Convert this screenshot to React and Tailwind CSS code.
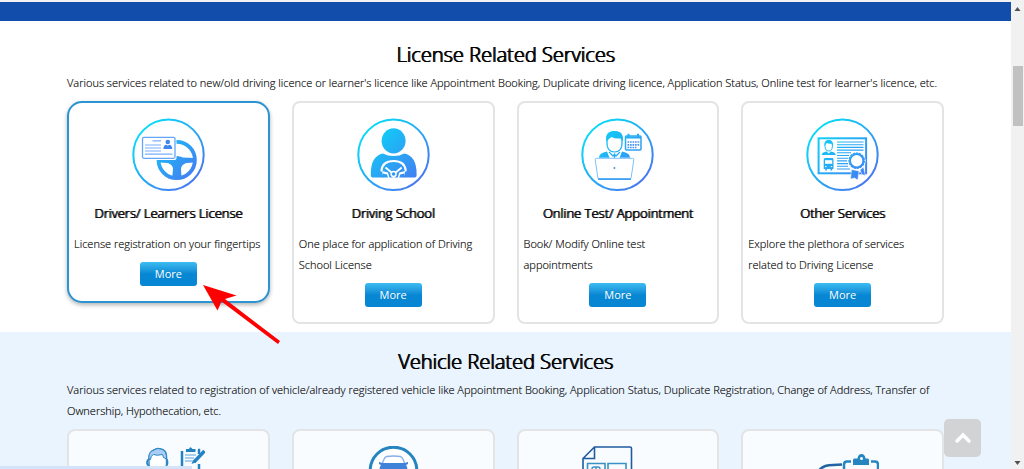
import React from "react";

const licenseServices = [
  {
    title: "Drivers/ Learners License",
    text: "License registration on your fingertips",
    icon: LicenseIcon,
    active: true
  },
  {
    title: "Driving School",
    text: "One place for application of Driving School License",
    icon: SchoolIcon
  },
  {
    title: "Online Test/ Appointment",
    text: "Book/ Modify Online test appointments",
    icon: TestIcon
  },
  {
    title: "Other Services",
    text: "Explore the plethora of services related to Driving License",
    icon: OtherIcon
  }
];

const vehicleIcons = [AgentIcon, CarIcon, DocumentIcon, ClipboardIcon];

function CircleIcon({ id, children }) {
  const paint = `url(#${id})`;
  return (
    <svg className="mx-auto block size-[73px]" viewBox="0 0 73 73" aria-hidden="true">
      <defs>
        <linearGradient id={id} gradientUnits="userSpaceOnUse" x1="10" y1="10" x2="62" y2="62">
          <stop offset="0" stopColor="#06dcf8" />
          <stop offset="1" stopColor="#467af2" />
        </linearGradient>
      </defs>
      <circle cx="36.5" cy="36.8" r="35.2" fill="none" stroke={paint} strokeWidth="2" />
      {children(paint)}
    </svg>
  );
}

function LicenseIcon() {
  return (
    <CircleIcon id="license">
      {paint => (
        <>
          <circle cx="44.7" cy="42" r="18.2" fill="none" stroke={paint} strokeWidth="3.8" />
          <path
            d="M27 40.5h11q6-4.5 13-1l11 .5v4.5l-8 .5q-5 2-5 6l.6 10h-9.5l.9-10q0-4-5-6l-9-.5z"
            fill={paint}
          />
          <rect x="9" y="18" width="35.5" height="24" rx="2" fill="#fff" />
          <rect x="10.5" y="19.3" width="32.5" height="21" rx="1.5" fill="#fff" stroke="#64a6fb" strokeWidth="1.3" />
          <path d="M20.5 22.8H29M13 27h16M13 30h16M13 33h16M13 36.2h27.5" stroke="#78b0fb" strokeWidth="1.2" />
          <circle cx="35.8" cy="24" r="2.3" fill="#3f86ee" />
          <path d="M31.4 31q0-4 3-4.2l1.4 1 1.4-1q3 .2 3 4.2z" fill="#3f86ee" />
        </>
      )}
    </CircleIcon>
  );
}

function SchoolIcon() {
  return (
    <CircleIcon id="school">
      {paint => (
        <>
          <ellipse cx="36.6" cy="22.8" rx="12" ry="12.6" fill={paint} />
          <path
            d="M26 35.6q4.5 2.5 10.6 2.5t10.6-2.5Q59.6 38 59.6 56v1.5q0 2-2 2h-42q-1.8 0-1.8-2V56Q13.8 38 26 35.6z"
            fill={paint}
          />
          <path d="M24.5 52.5q1-9.5 12.1-9.5t12.1 9.5" fill="none" stroke="#fff" strokeWidth="2.2" strokeLinecap="round" />
          <path d="M28.5 49.5l6 5M44.7 49.5l-6 5M36.6 58v2" stroke="#fff" strokeWidth="1.8" />
          <path d="M25 53l6 1.5 1.5 5.5h-6zM48.2 53l-6 1.5-1.5 5.5h6z" fill="#fff" />
          <path d="M26 55.5l4 1 1 3h-5.5zM47.2 55.5l-4 1-1 3h5.5z" fill={paint} />
          <circle cx="36.6" cy="56" r="2.5" fill={paint} stroke="#fff" strokeWidth="1.4" />
        </>
      )}
    </CircleIcon>
  );
}

function TestIcon() {
  return (
    <CircleIcon id="test">
      {paint => (
        <>
          <path d="M26 23q-1.5-9.5 7.5-9.5T41 23q.5 11-7.5 11T26 23z" fill="#fff" stroke={paint} strokeWidth="1.2" />
          <path d="M25.6 24q-2-10.8 7.9-10.8T41.4 24l-1.8-3.5q-6 .5-9-1.5-2.6 1-5 5z" fill={paint} />
          <path d="M18 39.8q0-4.8 8-6.3l2.5 6.3zM49 39.8q0-4.8-8-6.3l-2.5 6.3z" fill={paint} />
          <path d="M28 34l4 4 1.5-2 1.5 2 4-4M33.5 36v4" fill="none" stroke={paint} strokeWidth="1.2" />
          <path d="M15.5 40.3h36q1.5 0 1.3 1.5L50 60.5H17L14.2 41.8q-.2-1.5 1.3-1.5z" fill="#fff" stroke="#7fc0fa" />
          <path d="M17 60.5h33V62H17z" fill="#3f9ff5" />
          <circle cx="33.4" cy="50" r="1" fill={paint} />
          <rect x="44.5" y="18" width="15.5" height="14" rx="1" fill="none" stroke={paint} strokeWidth="1.5" />
          <path d="M44.5 18.6H60v2H44.5zM46.5 15.8h2v4h-2zM56 15.8h2v4h-2z" fill={paint} />
          <path d="M46.5 24h12M46.5 26.8h12M46.5 29.5h9" stroke="#4a93f5" strokeWidth="1.7" strokeDasharray="1.7 .8" />
        </>
      )}
    </CircleIcon>
  );
}

function OtherIcon() {
  return (
    <CircleIcon id="other">
      {paint => (
        <>
          <rect x="12.6" y="20.3" width="47.5" height="35" fill="#fff" stroke={paint} strokeWidth="2" />
          <path
            d="M31 24h26.5M31 26.7h26.5M31 29.4h26.5M31 32.1h26.5M31 34.8h14M31 37.5h12M31 40.2h11M31 42.9h10M31 45.6h11M31 48.3h11M31 51h13"
            stroke={paint}
            strokeWidth="1.1"
          />
          <path d="M19 28q-.5-5.5 3.7-5.5T26.4 28q0 5-3.7 5T19 28z" fill="#fff" stroke={paint} />
          <path d="M18.6 28q-.8-6 4.1-6t4.1 6l-1.5-2.3q-3 .3-4.5-.7z" fill={paint} />
          <path d="M15.7 37q0-3 5-3.6l2 2 2-2q5 .6 5 3.6z" fill={paint} />
          <path d="M19 40h7.5q1 0 1 2v9h-1.3v1.5h-1.7V51h-3.6v1.5h-1.7V51h-1.5v-9q0-2 1.3-2z" fill={paint} />
          <path d="M19 42.2h7.2v3.6H19z" fill="#fff" />
          <path d="M19 48.6h1.5M24.7 48.6h1.5" stroke="#fff" />
          <path d="M45.5 51.5l7.5 1.5-1.2 9-3.3-2-4 1zM54 52l3.5-3 1.8 8.5-3.3-1z" fill={paint} stroke="#fff" strokeWidth=".5" />
          <circle cx="50.7" cy="42.7" r="9" fill="#fff" />
          <circle cx="50.7" cy="42.7" r="6.7" fill="#fff" stroke={paint} strokeWidth="2" />
          <circle cx="50.7" cy="42.7" r="7.7" fill="none" stroke={paint} strokeWidth="1.2" strokeDasharray="2.4 .8" />
        </>
      )}
    </CircleIcon>
  );
}

function AgentIcon() {
  return (
    <svg className="mx-auto block size-[73px]" viewBox="0 0 73 73" fill="none" aria-hidden="true">
      <path d="M17 19V12q0-6 5-8 3-2.5 7-1 6 1.5 5.5 8v8q-1 5-5 7h-7q-4-2-5.5-7z" fill="#fff" stroke="#2a87c7" strokeWidth="1.4" />
      <path d="M17 13q-1-7 5-9 3-2.5 7-1 6 1.5 5.5 10l-3-1.5-1-3q-6 1.5-9 0-3 1-3 5z" fill="#a9cdf5" stroke="#2a87c7" />
      <path d="M17 13q-2 1-2 3.5t2 3M34.5 13q1 1 1 3.5t-1 3" stroke="#2a87c7" strokeWidth="1.8" />
      <path d="M50 5v36h17V18M67 8V4h-1" stroke="#2382c3" strokeWidth="2.5" />
      <path d="M54 6V3h3q1-3.5 3.5 0h3v3z" fill="#2382c3" />
      <path d="M53 9h11M53 12h9M53 15h7" stroke="#8fc0e6" strokeWidth="1.3" />
      <path d="M72.5 5L62 16" stroke="#2382c3" strokeWidth="3.5" />
      <path d="M61 14l-1.5 4 4-1.5z" fill="#2382c3" />
    </svg>
  );
}

function CarIcon() {
  return (
    <svg className="mx-auto block size-[73px]" viewBox="0 0 73 73" fill="none" aria-hidden="true">
      <circle cx="36.5" cy="24.5" r="23.3" fill="#fff" stroke="#2485c1" strokeWidth="3" />
      <path d="M25.5 17q2-6 4-6.5 7-1 14 0 2 .5 4 6.5" stroke="#88aeee" strokeWidth="1.3" />
      <path d="M22 16l3.5 1h22l3.5-1v2l-2 1q1.5 2 1.5 5v8h-4v-3H27v3h-4.5v-8q0-3 1.5-5l-2-1z" fill="#3e82da" />
    </svg>
  );
}

function DocumentIcon() {
  return (
    <svg className="mx-auto block size-[73px]" viewBox="0 0 73 73" fill="none" aria-hidden="true">
      <path d="M2 12.5L13.5 1H49q1.5 0 1.5 1.5V60H2zM2 12.5h11.5V1" stroke="#1e5c9e" strokeWidth="1.6" />
      <path d="M6.5 17.5H24v15H6.5zM27 17.5h18v15H27z" stroke="#3992c4" strokeWidth="1.6" />
      <path d="M11 24v-1q0-2 2-2h4q2 0 2 2v1M15 21v4" stroke="#3992c4" strokeWidth="1.4" />
    </svg>
  );
}

function ClipboardIcon() {
  return (
    <svg className="mx-auto block size-[73px]" viewBox="0 0 73 73" fill="none" aria-hidden="true">
      <path d="M45 15.5h-4q-3 0-3 3V50h34V18.5q0-3-3-3h-4" stroke="#2485c1" strokeWidth="2.5" />
      <path d="M47 19v-5q0-1.5 1.5-1.5h3q.5-4.5 4-4.5t4 4.5h2q1.5 0 1.5 1.5v5z" fill="#2485c1" />
      <circle cx="55.5" cy="12.5" r="1.5" fill="#fff" />
      <path d="M36 18.5l-13 .8q-6 .7-10 5" stroke="#1f64a3" strokeWidth="2.5" />
    </svg>
  );
}

function ServiceCard({ title, text, icon: Icon, active }) {
  return (
    <article
      className={
        active
          ? "rounded-[15px] border-2 border-[#2b94d2] bg-white px-[5px] py-[15px] shadow-[0_2px_4px_rgba(0,0,0,0.3)]"
          : "rounded-lg border-2 border-[#e3e4e6] bg-white px-[5px] py-[15px]"
      }
    >
      <Icon />
      <h3 className="mt-3 text-center text-[13px] leading-[21px] font-light text-black [text-shadow:1px_0_#000,0_0_#000]">
        {title}
      </h3>
      <p className="mt-[9px] text-[11px] leading-[21px] font-light [text-shadow:0_0_#333]">{text}</p>
      <button
        type="button"
        className="mx-auto mt-2 block h-6 w-[57px] rounded-[3px] bg-linear-to-b from-[#3cbcf2] to-[#0787d3] to-50% text-[11px] text-white"
      >
        More
      </button>
    </article>
  );
}

function SectionHeader({ title, text }) {
  return (
    <>
      <h2 className="text-center text-[20px] leading-[30px] font-light text-black [text-shadow:1px_0_#000,0_0_#000]">
        {title}
      </h2>
      <p className="mt-[2px] text-[11px] leading-[21px] font-light [text-shadow:0_0_#333]">{text}</p>
    </>
  );
}

function ScrollBar() {
  return (
    <div className="flex w-[13px] shrink-0 flex-col items-center bg-[#f1f1f1] pt-[7px] pb-1">
      <svg width="7" height="4" viewBox="0 0 7 4" aria-hidden="true">
        <path d="M3.5 0L6.5 4h-6z" fill="#505050" />
      </svg>
      <div className="mt-[55px] h-[60px] w-[10px] bg-[#c1c1c1]" />
      <svg className="mt-auto" width="7" height="4" viewBox="0 0 7 4" aria-hidden="true">
        <path d="M3.5 4L6.5 0h-6z" fill="#505050" />
      </svg>
    </div>
  );
}

export default function App() {
  return (
    <div className="relative flex h-screen overflow-hidden bg-white font-['Open_Sans',sans-serif] text-[#333]">
      <main className="min-w-0 flex-1">
        <div className="h-[21px] border-t-2 border-[#f1f1f1] bg-[#124dac]" />
        <section className="px-[67px] pt-[19px] pb-2">
          <SectionHeader
            title="License Related Services"
            text="Various services related to new/old driving licence or learner's licence like Appointment Booking, Duplicate driving licence, Application Status, Online test for learner's licence, etc."
          />
          <div className="mt-2 grid grid-cols-4 items-start gap-[22px]">
            {licenseServices.map(service => (
              <ServiceCard key={service.title} {...service} />
            ))}
          </div>
        </section>
        <section className="bg-[#e9f4ff] px-[67px] pt-[15px] pb-2">
          <SectionHeader
            title="Vehicle Related Services"
            text="Various services related to registration of vehicle/already registered vehicle like Appointment Booking, Application Status, Duplicate Registration, Change of Address, Transfer of Ownership, Hypothecation, etc."
          />
          <div className="mt-2 grid grid-cols-4 items-start gap-[22px]">
            {vehicleIcons.map((Icon, i) => (
              <article key={i} className="rounded-lg border-2 border-[#e3e4e6] bg-[#f9fcff] px-[5px] py-[15px]">
                <Icon />
              </article>
            ))}
          </div>
        </section>
      </main>
      <ScrollBar />

      <svg
        className="pointer-events-none absolute top-[284px] left-[202px]"
        width="80"
        height="60"
        viewBox="0 0 80 60"
        aria-hidden="true"
      >
        <path d="M1 1l33.5 10.5L23 15l55 42-2 3-56.5-42.5-4 9z" fill="#fe0000" />
      </svg>
      <button
        type="button"
        aria-label="Back to top"
        className="absolute right-[43px] bottom-3 flex h-[38px] w-[37px] items-center justify-center rounded-[5px] bg-[#d2d3d4]"
      >
        <svg width="18" height="12" viewBox="0 0 18 12" fill="none" aria-hidden="true">
          <path d="M3 9l6-6 6 6" stroke="#fff" strokeWidth="3.5" strokeLinecap="round" />
        </svg>
      </button>
      <div className="absolute bottom-0 left-0 h-[3px] w-48 bg-[#d3e3f9]" />
    </div>
  );
}
